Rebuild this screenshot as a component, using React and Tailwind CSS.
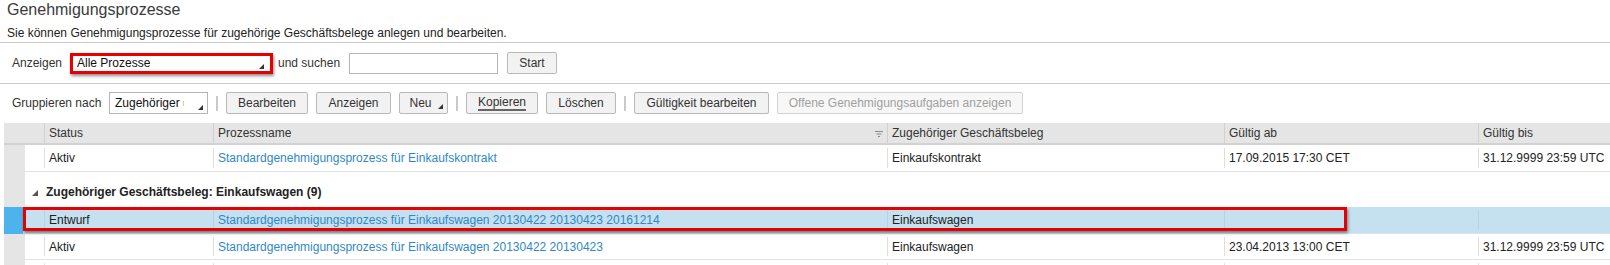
import React from "react";

const Corner = ({ className = "" }) => (
    <svg width="5" height="5" viewBox="0 0 5 5" className={className}>
        <polygon points="5,0 5,5 0,5" fill="#333" />
    </svg>
);

const Btn = ({ children, w, disabled, underline }) => (
    <div
        className={`h-[22px] ${w} shrink-0 flex items-center justify-center border rounded-[2px] whitespace-nowrap ${
            disabled
                ? "border-[#d2d2d2] bg-[#f7f7f7] text-[#a0a0a0]"
                : "border-[#b9b9b9] bg-[#f2f2f2] text-[#333]"
        }`}
    >
        <span className={underline ? "border-b-2 border-[#666] leading-[13px]" : ""}>{children}</span>
    </div>
);

const Sep = () => <div className="w-[2px] h-[15px] mt-[4px] bg-[#c9c9c9] shrink-0" />;

const cols = [
    { w: "w-[169px]" },
    { w: "w-[674px]" },
    { w: "w-[337px]" },
    { w: "w-[254px]" },
    { w: "flex-1" },
];

const Cell = ({ w, children, link, sep = "border-[#dedede]" }) => (
    <div className={`${w} h-full flex items-center py-[3px]`}>
        <div
            className={`h-full w-full flex items-center pl-[4px] border-l ${sep} whitespace-nowrap ${
                link ? "text-[#2f88c7]" : "text-[#222]"
            }`}
        >
            {children}
        </div>
    </div>
);

const rowData = (r) => [r.status, r.name, r.beleg, r.ab, r.bis];

const App = () => {
    const first = {
        status: "Aktiv",
        name: "Standardgenehmigungsprozess für Einkaufskontrakt",
        beleg: "Einkaufskontrakt",
        ab: "17.09.2015 17:30 CET",
        bis: "31.12.9999 23:59 UTC",
    };
    const selected = {
        status: "Entwurf",
        name: "Standardgenehmigungsprozess für Einkaufswagen 20130422 20130423 20161214",
        beleg: "Einkaufswagen",
        ab: "",
        bis: "",
    };
    const aktiv = {
        status: "Aktiv",
        name: "Standardgenehmigungsprozess für Einkaufswagen 20130422 20130423",
        beleg: "Einkaufswagen",
        ab: "23.04.2013 13:00 CET",
        bis: "31.12.9999 23:59 UTC",
    };

    return (
        <div className="w-[1610px] h-[265px] overflow-hidden bg-white text-[12px] text-[#333] font-['Liberation_Sans',Arial,sans-serif]">
            <div className="pl-[7px] text-[16px] leading-[20px] text-[#3a3a3a]">Genehmigungsprozesse</div>
            <div className="pl-[7px] mt-[6px] leading-[14px] text-[#222]">
                Sie können Genehmigungsprozesse für zugehörige Geschäftsbelege anlegen und bearbeiten.
            </div>
            <div className="mt-[2px] border-t border-[#cccccc]" />

            {/* Anzeigen row */}
            <div className="h-[40px] flex items-center pl-[12px]">
                <span className="w-[58px] shrink-0">Anzeigen</span>
                <div className="w-[203px] h-[21px] shrink-0 border-[3px] border-[#e60000] shadow-[1px_2px_3px_rgba(0,0,0,0.45)] flex items-center pl-[4px] relative text-[#111]">
                    Alle Prozesse
                    <Corner className="absolute right-[6px] bottom-[2px]" />
                </div>
                <span className="ml-[5px] w-[71px] shrink-0 whitespace-nowrap">und suchen</span>
                <div className="w-[149px] h-[21px] border border-[#b5b5b5] bg-white shrink-0" />
                <div className="ml-[9px]">
                    <Btn w="w-[50px]">Start</Btn>
                </div>
            </div>
            <div className="border-t border-[#cccccc]" />

            {/* Toolbar */}
            <div className="h-[39px] flex items-start pt-[8px] pl-[12px]">
                <span className="w-[97px] shrink-0 h-[22px] flex items-center whitespace-nowrap">Gruppieren nach</span>
                <div className="flex items-start gap-[8px]">
                    <div className="w-[99px] h-[22px] shrink-0 border border-[#b5b5b5] bg-white flex items-center pl-[5px] relative text-[#111]">
                        Zugehöriger
                        <span className="ml-[3px] w-[1px] h-[5px] bg-[#f3c597]" />
                        <Corner className="absolute right-[4px] bottom-[3px]" />
                    </div>
                    <Sep />
                    <Btn w="w-[82px]">Bearbeiten</Btn>
                    <Btn w="w-[75px]">Anzeigen</Btn>
                    <div className="relative shrink-0">
                        <Btn w="w-[49px]">
                            <span className="pr-[6px]">Neu</span>
                        </Btn>
                        <Corner className="absolute right-[5px] bottom-[5px]" />
                    </div>
                    <Sep />
                    <Btn w="w-[72px]" underline>
                        Kopieren
                    </Btn>
                    <Btn w="w-[70px]">Löschen</Btn>
                    <Sep />
                    <Btn w="w-[135px]">Gültigkeit bearbeiten</Btn>
                    <Btn w="w-[246px]" disabled>
                        Offene Genehmigungsaufgaben anzeigen
                    </Btn>
                </div>
            </div>

            {/* Table */}
            <div className="ml-[4px] relative">
                <div className="flex h-[22px] bg-[#e5e5e5] border-b-2 border-[#d2d2d2]">
                    <div className="w-[40px]" />
                    {["Status", "Prozessname", "Zugehöriger Geschäftsbeleg", "Gültig ab", "Gültig bis"].map((h, i) => (
                        <div key={h} className={`${cols[i].w} h-full border-l border-[#d0d0d0] flex items-center pl-[4px] relative`}>
                            {h}
                            {i === 1 && (
                                <svg width="8" height="6" viewBox="0 0 8 6" className="absolute right-[4px] top-[8px]">
                                    <rect x="0" y="0" width="8" height="1" fill="#8a8a8a" />
                                    <rect x="1.5" y="2.5" width="5" height="1" fill="#8a8a8a" />
                                    <rect x="3" y="5" width="2" height="1" fill="#8a8a8a" />
                                </svg>
                            )}
                        </div>
                    ))}
                </div>

                <div className="flex h-[27px]">
                    <div className="w-[21px] bg-[#e5e5e5]" />
                    <div className="flex flex-1 border-b border-[#e2e2e2]">
                        <div className="w-[19px]" />
                        {rowData(first).map((v, i) => (
                            <Cell key={i} w={cols[i].w} link={i === 1}>
                                {v}
                            </Cell>
                        ))}
                    </div>
                </div>

                <div className="flex h-[35px]">
                    <div className="w-[21px] bg-[#e5e5e5]" />
                    <div className="flex-1 flex items-start pt-[13px] pl-[7px] font-bold text-[#222]">
                        <svg width="6" height="6" viewBox="0 0 6 6" className="mt-[5px] mr-[8px]">
                            <polygon points="6,0 6,6 0,6" fill="#555" />
                        </svg>
                        <span className="leading-[14px]">Zugehöriger Geschäftsbeleg: Einkaufswagen (9)</span>
                    </div>
                </div>

                <div className="flex h-[27px]">
                    <div className="w-[19px] bg-[#4db3ec]" />
                    <div className="flex flex-1 bg-[#c5e0ee] border-b border-[#d6e6ef]">
                        <div className="w-[21px]" />
                        {rowData(selected).map((v, i) => (
                            <Cell key={i} w={cols[i].w} link={i === 1} sep="border-[#b6d3e3]">
                                {v}
                            </Cell>
                        ))}
                    </div>
                </div>

                <div className="flex h-[26px]">
                    <div className="w-[21px] bg-[#e5e5e5]" />
                    <div className="flex flex-1 border-b border-[#e2e2e2]">
                        <div className="w-[19px]" />
                        {rowData(aktiv).map((v, i) => (
                            <Cell key={i} w={cols[i].w} link={i === 1}>
                                {v}
                            </Cell>
                        ))}
                    </div>
                </div>

                <div className="flex h-[26px]">
                    <div className="w-[21px] bg-[#e5e5e5]" />
                    <div className="flex flex-1">
                        <div className="w-[19px]" />
                        {cols.map((c, i) => (
                            <Cell key={i} w={c.w} />
                        ))}
                    </div>
                </div>

                {/* highlight annotation */}
                <div className="absolute left-[19px] top-[84px] w-[1324px] h-[24px] border-[3px] border-[#e60000] shadow-[1px_2px_3px_rgba(0,0,0,0.45)]" />
            </div>
        </div>
    );
};

export default App;
